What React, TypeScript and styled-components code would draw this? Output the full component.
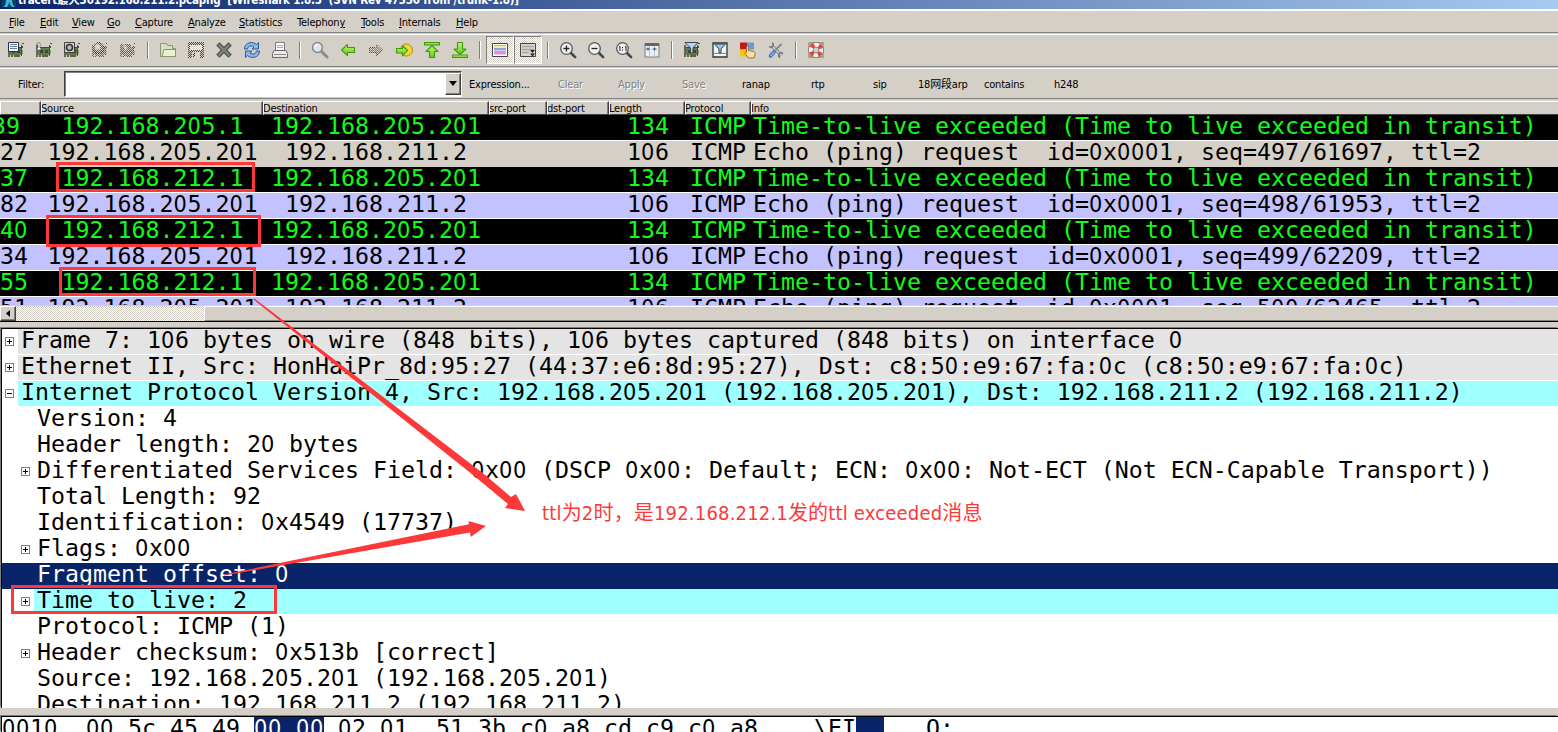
import React from "react";
import styled, { createGlobalStyle, css } from "styled-components";

const FACE = "#d4d0c8";
const NAVY = "#0a246a";
const MARK = "#fc3838";
const UI_FONT = '"DejaVu Sans Condensed", "Noto Sans CJK SC", sans-serif';
const MONO_FONT = '"DejaVu Sans Mono", monospace';

const GlobalStyle = createGlobalStyle`
  * { box-sizing: border-box; }
  html, body { margin: 0; padding: 0; overflow: hidden; background: ${FACE}; }
  u { text-underline-offset: 1px; text-decoration-thickness: 1px; }
`;

const Window = styled.div`
  position: relative;
  display: flex;
  flex-direction: column;
  width: 1558px;
  height: 732px;
  overflow: hidden;
  background: ${FACE};
  color: #000;
  font: 11px/13px ${UI_FONT};
  letter-spacing: -0.2px;
  white-space: pre;
`;

/* ---------- title bar ---------- */

const TitleBar = styled.div`
  display: flex;
  align-items: flex-end;
  flex: none;
  height: 9px;
  overflow: hidden;
  padding-left: 2px;
  background: linear-gradient(90deg, ${NAVY} 0%, #a6caf0 100%);
  color: #fff;
`;

const TitleText = styled.span`
  margin: 0 0 2px 2px;
  font-size: 11.5px;
  font-weight: bold;
  line-height: 14px;
  letter-spacing: -0.18px;
`;

/* ---------- bars ---------- */

const MenuBar = styled.div`
  display: grid;
  flex: none;
  grid-template-columns: 31px 32px 35px 28px 53px 51px 58px 64px 38px 57px 40px;
  height: 24px;
  padding: 5px 0 0 9px;
  border-top: 2px solid #fff;
  border-bottom: 1px solid #808080;
`;

const ToolBar = styled.div`
  display: flex;
  flex: none;
  align-items: center;
  height: 33px;
  margin-top: 1px;
  padding: 0 0 2px 2px;
  border-top: 1px solid #fff;
  border-bottom: 1px solid #808080;
`;

const ToolButton = styled.div<{ $pressed?: boolean }>`
  display: flex;
  align-items: center;
  justify-content: center;
  width: 28px;
  height: 28px;
  ${(p) =>
    p.$pressed &&
    css`
      border: 1px solid;
      border-color: #808080 #fff #fff #808080;
      background: repeating-conic-gradient(#fff 0 25%, ${FACE} 0 50%) 0 0 / 2px 2px;
    `}
`;

const Separator = styled.div`
  width: 2px;
  height: 18px;
  margin: 0 5px;
  border-left: 1px solid #808080;
  border-right: 1px solid #fff;
`;

const FilterBar = styled.div`
  display: flex;
  flex: none;
  align-items: center;
  height: 31px;
  margin-top: 1px;
  border-top: 1px solid #fff;
  border-bottom: 1px solid #808080;
`;

const FilterLabel = styled.span`
  width: 64px;
  padding: 1px 0 0 18px;
`;

const FilterInput = styled.div`
  display: flex;
  justify-content: flex-end;
  width: 398px;
  height: 26px;
  border: 1px solid;
  border-color: #404040 #fff #fff #404040;
  box-shadow: inset 1px 1px #808080;
  background: #fff;
`;

const DropButton = styled.div`
  display: flex;
  align-items: center;
  justify-content: center;
  width: 16px;
  height: 22px;
  margin: 1px 0;
  border: 1px solid;
  border-color: #fff #404040 #404040 #fff;
  box-shadow: inset -1px -1px #808080;
  background: ${FACE};
`;

const FilterActions = styled.div`
  display: grid;
  grid-template-columns: 89px 60px 64px 60px 69px 62px 45px 66px 70px 40px;
  padding: 1px 0 0 7px;
`;

const FilterAction = styled.span<{ $disabled?: boolean }>`
  ${(p) => p.$disabled && "color: #808080; text-shadow: 1px 1px #fff;"}
`;

/* ---------- packet list ---------- */

const LIST_COLUMNS = "41px 222px 226px 58px 62px 76px 66px 1fr";

const PacketPane = styled.div`
  flex: none;
  height: 222px;
  margin-top: 2px;
  overflow: hidden;
`;

const HeaderRow = styled.div`
  display: grid;
  grid-template-columns: ${LIST_COLUMNS};
  height: 14px;
`;

const HeaderCell = styled.div`
  height: 14px;
  overflow: hidden;
  border: 1px solid;
  border-color: #fff #404040 #404040 #fff;
  box-shadow: inset -1px 0 #808080;
  line-height: 13px;
  text-indent: -1px;

  &:last-child {
    border-right: 0;
    box-shadow: none;
  }
`;

const PacketRows = styled.div`
  height: 190px;
  overflow: hidden;
`;

type Tone = "error" | "ping" | "focus";

const tones: Record<Tone, { bg: string; fg: string; line: string }> = {
  error: { bg: "#000", fg: "#12fc1c", line: "#fff" },
  ping: { bg: "#c2c2ff", fg: "#000", line: "#fff" },
  focus: { bg: FACE, fg: "#000", line: FACE },
};

const MonoText = styled.span`
  font: 23.25px/22px ${MONO_FONT};
  letter-spacing: 0;
`;

/* Plain, undotted zero that keeps the 14px character cell. */
const PlainZero = styled.span`
  font-family: "DejaVu Sans Condensed", sans-serif;
  letter-spacing: 0.69px;
`;

const PacketRow = styled.div<{ $tone: Tone }>`
  display: grid;
  grid-template-columns: ${LIST_COLUMNS};
  height: 26px;
  border-bottom: 1px solid ${(p) => tones[p.$tone].line};
  background: ${(p) => tones[p.$tone].bg};
  color: ${(p) => tones[p.$tone].fg};
`;

const PacketCell = styled.div<{ $align?: "center" | "right"; $shift?: number }>`
  display: flex;
  justify-content: ${(p) =>
    p.$align === "center" ? "center" : p.$align === "right" ? "flex-end" : "flex-start"};
  padding-left: ${(p) => Math.max(p.$shift ?? 0, 0)}px;
  padding-right: ${(p) => (p.$align === "right" ? 16 : 0)}px;
  margin-left: ${(p) => Math.min(p.$shift ?? 0, 0)}px;
`;

/* ---------- scroll bar ---------- */

const ScrollBar = styled.div`
  display: flex;
  height: 16px;
  margin-top: 1px;
  border-bottom: 1px solid #000;
  background: repeating-conic-gradient(#fff 0 25%, ${FACE} 0 50%) 0 0 / 2px 2px;
`;

const ScrollArrow = styled.div`
  display: flex;
  align-items: center;
  justify-content: center;
  width: 16px;
  border: 1px solid;
  border-color: #fff #404040 #404040 #fff;
  box-shadow: inset -1px -1px #808080;
  background: ${FACE};
`;

const ScrollThumb = styled.div`
  flex: 1;
  margin-left: 188px;
  border-top: 1px solid #fff;
  border-left: 1px solid #fff;
  border-bottom: 1px solid #808080;
  background: ${FACE};
`;

/* ---------- packet details ---------- */

const Pane = styled.div<{ $height: number; $gap: number }>`
  flex: none;
  height: ${(p) => p.$height}px;
  margin-top: ${(p) => p.$gap}px;
  overflow: hidden;
  border: solid #000;
  border-width: 1px 0 0 1px;
  margin-left: 1px;
  box-shadow: -1px -1px #808080;
  background: #fff;
`;

const TreeRow = styled.div<{ $selected?: boolean; $level: number }>`
  display: grid;
  grid-template-columns: ${(p) => (p.$level ? 32 : 16)}px 1fr;
  height: 26px;
  background: ${(p) => (p.$selected ? NAVY : "#fff")};
  color: ${(p) => (p.$selected ? "#fff" : "#000")};
`;

const TreeGutter = styled.div`
  display: flex;
  justify-content: flex-end;
  padding: 8px 4px 0 0;
`;

const TreeLabel = styled.div<{ $fill?: string }>`
  height: 25px;
  padding-left: 3px;
  background: ${(p) => p.$fill ?? "transparent"};
`;

/* ---------- bytes ---------- */

const BytesRow = styled.div`
  padding-left: 0;
`;

const ByteSelection = styled.span`
  display: inline-block;
  background: ${NAVY};
  color: #fff;
`;

/* ---------- annotations over the panes ---------- */

const MarkLayer = styled.svg`
  position: absolute;
  inset: 0;
  pointer-events: none;
`;

const MarkNote = styled.div`
  position: absolute;
  left: 542px;
  top: 500px;
  color: ${MARK};
  font: 20px/26px ${UI_FONT};
  letter-spacing: 0.18px;
`;

function Mono({ text }: { text: string }) {
  return (
    <MonoText>
      {text.split(/(0+)/).map((part, i) =>
        part.startsWith("0") ? <PlainZero key={i}>{part}</PlainZero> : part,
      )}
    </MonoText>
  );
}

/* ---------- icons ---------- */

const Icon = ({ children, dim }: { children: React.ReactNode; dim?: boolean }) => (
  <svg width="18" height="18" viewBox="0 0 18 18">
    <defs>
      <pattern id="dither" width="2" height="2" patternUnits="userSpaceOnUse">
        <path d="M0 0h1v1h-1zM1 1h1v1h-1z" fill={FACE} shapeRendering="crispEdges" />
      </pattern>
      <linearGradient id="lime" x1="0" y1="0" x2="0" y2="1">
        <stop offset="0" stopColor="#c4f56a" />
        <stop offset="1" stopColor="#62c81c" />
      </linearGradient>
    </defs>
    {children}
    {dim && <rect width="18" height="18" fill="url(#dither)" />}
  </svg>
);

const Card = () => (
  <g shapeRendering="crispEdges">
    <path d="M1 4h2v12h-2z" fill="#66665e" />
    <path d="M3 6h11v8h-11z" fill="#5f7a50" />
    <path d="M3 6h11v1h-11zM5 9h3v3h-3zM10 9h3v3h-3z" fill="#3a4a34" />
    <path d="M4 14h2v2h-2zM7 14h6v2h-6z" fill="#6d5c36" />
    <path d="M14 4h1v11h-1zM15 2h2v1h-2zM15 5h1v2h-1z" fill="#4c4c48" />
    <path d="M15 9h1v4h-1z" fill="#8aa070" />
  </g>
);

const Lens = ({ children }: { children?: React.ReactNode }) => (
  <>
    <path d="M11.5 11.5l4.6 4.6" stroke="#44484a" strokeWidth="2.6" strokeLinecap="round" />
    <circle cx="7.5" cy="7.5" r="5.8" fill="#eef0ee" stroke="#55595a" strokeWidth="1.3" />
    {children}
  </>
);

const GREEN = { fill: "url(#lime)", stroke: "#3f9a10", strokeWidth: 1.1, strokeLinejoin: "round" as const };

const icons: Record<string, React.ReactNode> = {
  interfaces: (
    <Icon>
      <Card />
      <path d="M1.5 1.5h10v9h-10z" fill="#f4f6f8" stroke="#30343a" />
      <path d="M3 3.5h7M3 5.5h7M3 7.5h7" stroke="#5c7ea8" />
    </Icon>
  ),
  options: (
    <Icon>
      <Card />
      <path d="M2 2h3v5h1v2h-4v-2h1v-3h-1z" fill="#fff" stroke="#555" strokeWidth=".7" />
    </Icon>
  ),
  start: (
    <Icon>
      <Card />
      <path d="M1.5 1.5h10v10h-10z" fill="#c9cdca" stroke="#444" />
      <circle cx="6.5" cy="6.5" r="3" fill="#b9c0bc" stroke="#333" strokeWidth="1.6" />
    </Icon>
  ),
  stop: (
    <Icon dim>
      <Card />
      <circle cx="7.5" cy="7" r="5.5" fill="#70504c" stroke="#282020" />
      <circle cx="6.5" cy="6" r="3.4" fill="#e8dcd8" stroke="#c04038" strokeWidth="1.4" />
    </Icon>
  ),
  restart: (
    <Icon dim>
      <Card />
      <path d="M2 3h10v9h-10z" fill="#5c5c54" />
      <path d="M3 2l6 5-3 3z" fill="#d8b870" />
    </Icon>
  ),
  open: (
    <Icon>
      <path d="M1.500 2.500h6l1 2h5v3h3v8h-15z" fill="#d9dfc0" stroke="#8a9870" />
      <path d="M3 15.500l2-7h11.500v7z" fill="#e9eed6" stroke="#8a9870" />
    </Icon>
  ),
  save: (
    <Icon dim>
      <g shapeRendering="crispEdges">
        <path d="M1 1h16v16h-16z" fill="#38506c" />
        <path d="M3 1h12v3h-12z" fill="#b81818" />
        <path d="M3 4h12v5h-12z" fill="#fff" />
        <path d="M5 11h8v6h-8z" fill="#d8dce0" />
        <path d="M6 12h2v4h-2z" fill="#203050" />
      </g>
    </Icon>
  ),
  close: (
    <Icon>
      <path d="M4.500 4.500l9 9M13.500 4.500l-9 9" stroke="#4b4e4b" strokeWidth="4.600" strokeLinecap="square" />
      <path d="M4.500 4.500l9 9M13.500 4.500l-9 9" stroke="#7c807c" strokeWidth="2.600" strokeLinecap="square" />
    </Icon>
  ),
  reload: (
    <Icon>
      <path
        d="M1.500 8c0-7 8.500-8 12-4.500l2-2v6.500h-6.500l2-2c-2.500-2-6-1-6.500 2z"
        fill="#8db5e6"
        stroke="#2c5c9e"
        strokeLinejoin="round"
      />
      <path
        d="M16.500 10c0 7-8.500 8-12 4.500l-2 2v-6.500h6.500l-2 2c2.500 2 6 1 6.500-2z"
        fill="#8db5e6"
        stroke="#2c5c9e"
        strokeLinejoin="round"
      />
    </Icon>
  ),
  print: (
    <Icon>
      <path d="M4.500 1.500h9v8h-9z" fill="#fff" stroke="#777" />
      <path d="M6 4.500h6M6 6.500h6" stroke="#aaa" />
      <path d="M3 9.500h12l1.500 3v4h-15v-4z" fill="#eceae6" stroke="#666" />
      <path d="M3 13.500h12" stroke="#888" />
    </Icon>
  ),
  find: (
    <Icon>
      <path d="M11 11l5 5" stroke="#8a8c8c" strokeWidth="3" strokeLinecap="round" />
      <circle cx="6.500" cy="6.500" r="4.900" fill="#dde6ee" stroke="#888a8a" strokeWidth="1.500" />
      <path d="M3.800 6a3 3 0 0 1 3-2.500" stroke="#fff" strokeWidth="1.500" fill="none" />
    </Icon>
  ),
  back: (
    <Icon>
      <path d="M2.500 9l6-5.500v3h7v5h-7v3z" {...GREEN} />
    </Icon>
  ),
  forward: (
    <Icon dim>
      <path d="M15.500 9l-6-5.500v3h-7v5h7v3z" fill="#6c9458" stroke="#34542a" />
    </Icon>
  ),
  goto: (
    <Icon>
      <circle cx="11.500" cy="9" r="6" fill="#f6d23c" stroke="#b98a10" />
      <path d="M12.500 9.500l-5-5v3h-6v4.500h6v3z" {...GREEN} />
    </Icon>
  ),
  first: (
    <Icon>
      <path d="M1.500 1.500h15v2.500h-15z" {...GREEN} />
      <path d="M9 4.500l6 6h-3.500v6h-5v-6h-3.500z" {...GREEN} />
    </Icon>
  ),
  last: (
    <Icon>
      <path d="M1.500 14h15v2.500h-15z" {...GREEN} />
      <path d="M9 13.500l6-5.500h-3.500v-6.500h-5v6.500h-3.500z" {...GREEN} />
    </Icon>
  ),
  colorize: (
    <Icon>
      <path d="M1.500 2.500h15v13h-15z" fill="#fff" stroke="#444" />
      <path d="M3 4.500h12" stroke="#f0a0a0" />
      <path d="M3 6h12" stroke="#e8dc50" />
      <path d="M3 8h12" stroke="#5890c0" strokeWidth="1.500" />
      <path d="M3 10.500h12M3 12.500h12" stroke="#d890e0" strokeWidth="2" />
    </Icon>
  ),
  autoscroll: (
    <Icon>
      <path d="M1.500 2.500h15v13h-15z" fill="#d6d6d2" stroke="#444" />
      <path d="M3 5.500h12M3 8.500h12M3 11.500h7" stroke="#a4a4a4" strokeWidth="1.600" />
      <path d="M11 9h5l-2.500 3zM11 12.500h5l-2.500 3z" fill="#222" />
    </Icon>
  ),
  zoomin: (
    <Icon>
      <Lens>
        <path d="M4.500 7.500h6M7.500 4.500v6" stroke="#222" strokeWidth="1.300" />
      </Lens>
    </Icon>
  ),
  zoomout: (
    <Icon>
      <Lens>
        <path d="M4.500 7.500h6" stroke="#222" strokeWidth="1.300" />
      </Lens>
    </Icon>
  ),
  zoomone: (
    <Icon>
      <Lens>
        <path d="M4 6.200l1-.7v4.500M10 6.200l1-.7v4.500M7.500 6v1.200M7.500 8.500v1.200" stroke="#222" fill="none" />
      </Lens>
    </Icon>
  ),
  resize: (
    <Icon>
      <path d="M2 2.500h14v13.500h-14z" fill="#eceeee" stroke="#787c80" />
      <path d="M2 2h14v3h-14z" fill="#60686e" />
      <path d="M6.500 5v11M11.500 5v11" stroke="#c4c8ca" />
      <path d="M3 8h4M5 6.500v3M9.500 8h4M11.500 6.500v3" stroke="#2c5888" />
    </Icon>
  ),
  capfilter: (
    <Icon>
      <Card />
      <path d="M2 1.500h13l-5 5.500v5h-2.500v-5z" fill="#b8d4ec" stroke="#33475c" />
    </Icon>
  ),
  dispfilter: (
    <Icon>
      <path d="M2 2h14v14h-14z" fill="#f2f2ee" stroke="#333" strokeWidth="1.300" />
      <path d="M3 12.500h12" stroke="#888" />
      <path d="M3.500 3h11l-4.500 5v4h-2v-4z" fill="#9cc0e0" stroke="#33475c" />
    </Icon>
  ),
  rules: (
    <Icon>
      <path d="M1 1.500h7v7h-7z" fill="#c8141c" />
      <path d="M8 1.500h7v7h-7z" fill="#6b9ad6" />
      <path d="M1 8.500h7v7h-7z" fill="#f4c414" />
      <path
        d="M7.500 5.500q1.500-1 2 .5v3.500l5.500 1q1.500.5 1 3l-1 3.500h-5.500l-3.500-4.500q0-1.500 1.500-1z"
        fill="#fbdcae"
        stroke="#a06c28"
      />
    </Icon>
  ),
  prefs: (
    <Icon>
      <path d="M4.500 4.500l10 10" stroke="#70767a" strokeWidth="3" />
      <path d="M4.500 4.500l10 10" stroke="#dfe2e2" strokeWidth="1.200" />
      <path d="M2 5.500q3 2 4-.5t-1-3M16 12.500q-3-2-4 .5t1 3.500" stroke="#70767a" strokeWidth="1.500" fill="none" />
      <path d="M14.500 3l-6 6" stroke="#85898c" strokeWidth="2" />
      <path d="M7 11l-3.500 4" stroke="#3c70b4" strokeWidth="3.600" strokeLinecap="round" />
      <path d="M6.800 11.200l-3 3.500" stroke="#8eb6e6" strokeWidth="1.500" strokeLinecap="round" />
    </Icon>
  ),
  help: (
    <Icon>
      <path d="M2 2h14v14h-14z" fill="none" stroke="#a08c60" strokeWidth="1.300" />
      <circle cx="9" cy="9" r="5.200" fill="none" stroke="#777" strokeWidth="5.400" />
      <circle cx="9" cy="9" r="5.200" fill="none" stroke="#f4f2f0" strokeWidth="4" />
      <circle
        cx="9"
        cy="9"
        r="5.200"
        fill="none"
        stroke="#e8403c"
        strokeWidth="4"
        strokeDasharray="3.600 4.568"
        strokeDashoffset="-2.300"
      />
    </Icon>
  ),
};

const toolGroups: string[][] = [
  ["interfaces", "options", "start", "stop", "restart"],
  ["open", "save", "close", "reload", "print"],
  ["find", "back", "forward", "goto", "first", "last"],
  ["colorize", "autoscroll"],
  ["zoomin", "zoomout", "zoomone", "resize"],
  ["capfilter", "dispfilter", "rules", "prefs"],
  ["help"],
];

const Expander = ({ open }: { open: boolean }) => (
  <svg width="9" height="9" viewBox="0 0 9 9" shapeRendering="crispEdges">
    <path d="M.5 .5h8v8h-8z" fill="#fff" stroke="#808080" />
    <path d={open ? "M2 4.500h5" : "M2 4.500h5M4.500 2v5"} stroke="#000" />
  </svg>
);

/* ---------- data ---------- */

const menus: [string, string, string][] = [
  ["", "F", "ile"],
  ["", "E", "dit"],
  ["", "V", "iew"],
  ["", "G", "o"],
  ["", "C", "apture"],
  ["", "A", "nalyze"],
  ["", "S", "tatistics"],
  ["Telephon", "y", ""],
  ["", "T", "ools"],
  ["", "I", "nternals"],
  ["", "H", "elp"],
];

const filterActions: [string, boolean][] = [
  ["Expression...", false],
  ["Clear", true],
  ["Apply", true],
  ["Save", true],
  ["ranap", false],
  ["rtp", false],
  ["sip", false],
  ["18网段arp", false],
  ["contains", false],
  ["h248", false],
];

const headers = ["", "Source", "Destination", "src-port", "dst-port", "Length", "Protocol", "Info"];

interface Packet {
  no: string;
  shift: number;
  tone: Tone;
  src: string;
  dst: string;
  len: string;
  info: string;
}

const exceeded = (no: string, src: string, shift = 0): Packet => ({
  no,
  shift,
  tone: "error",
  src,
  dst: "192.168.205.201",
  len: "134",
  info: "Time-to-live exceeded (Time to live exceeded in transit)",
});

const request = (no: string, seq: string, tone: Tone = "ping"): Packet => ({
  no,
  shift: 0,
  tone,
  src: "192.168.205.201",
  dst: "192.168.211.2",
  len: "106",
  info: `Echo (ping) request  id=0x0001, seq=${seq}, ttl=2`,
});

const packets: Packet[] = [
  exceeded("39", "192.168.205.1", -8),
  request("27", "497/61697", "focus"),
  exceeded("37", "192.168.212.1"),
  request("82", "498/61953"),
  exceeded("40", "192.168.212.1"),
  request("34", "499/62209"),
  exceeded("55", "192.168.212.1"),
  request("51", "500/62465"),
];

interface TreeItem {
  text: string;
  level: number;
  expander?: "plus" | "minus";
  fill?: string;
  selected?: boolean;
}

const GRAY = "#e4e4e4";
const CYAN = "#a0ffff";

const tree: TreeItem[] = [
  {
    text: "Frame 7: 106 bytes on wire (848 bits), 106 bytes captured (848 bits) on interface 0",
    level: 0,
    expander: "plus",
    fill: GRAY,
  },
  {
    text: "Ethernet II, Src: HonHaiPr_8d:95:27 (44:37:e6:8d:95:27), Dst: c8:50:e9:67:fa:0c (c8:50:e9:67:fa:0c)",
    level: 0,
    expander: "plus",
    fill: GRAY,
  },
  {
    text: "Internet Protocol Version 4, Src: 192.168.205.201 (192.168.205.201), Dst: 192.168.211.2 (192.168.211.2)",
    level: 0,
    expander: "minus",
    fill: CYAN,
  },
  { text: "Version: 4", level: 1 },
  { text: "Header length: 20 bytes", level: 1 },
  {
    text: "Differentiated Services Field: 0x00 (DSCP 0x00: Default; ECN: 0x00: Not-ECT (Not ECN-Capable Transport))",
    level: 1,
    expander: "plus",
  },
  { text: "Total Length: 92", level: 1 },
  { text: "Identification: 0x4549 (17737)", level: 1 },
  { text: "Flags: 0x00", level: 1, expander: "plus" },
  { text: "Fragment offset: 0", level: 1, selected: true },
  { text: "Time to live: 2", level: 1, expander: "plus", fill: CYAN },
  { text: "Protocol: ICMP (1)", level: 1 },
  { text: "Header checksum: 0x513b [correct]", level: 1, expander: "plus" },
  { text: "Source: 192.168.205.201 (192.168.205.201)", level: 1 },
  { text: "Destination: 192.168.211.2 (192.168.211.2)", level: 1 },
];

export default function App() {
  return (
    <>
      <GlobalStyle />
      <Window>
        <TitleBar>
          <svg width="14" height="9" viewBox="0 0 14 9">
            <path d="M0 0h14v7h-14z" fill="#103c58" />
            <path d="M1 7q3-1 3-7h6q0 5 3 7z" fill="#38b8e0" />
            <path d="M5 7q2-2 2-5 1 3 3 5z" fill="#103c58" />
          </svg>
          <TitleText>
            tracert最大30192.168.211.2.pcapng  [Wireshark 1.8.5  (SVN Rev 47350 from /trunk-1.8)]
          </TitleText>
        </TitleBar>

        <MenuBar>
          {menus.map(([before, key, after]) => (
            <span key={before + key + after}>
              {before}
              <u>{key}</u>
              {after}
            </span>
          ))}
        </MenuBar>

        <ToolBar>
          {toolGroups.map((group, g) => (
            <React.Fragment key={g}>
              {g > 0 && <Separator />}
              {group.map((name) => (
                <ToolButton key={name} $pressed={g === 3}>
                  {icons[name]}
                </ToolButton>
              ))}
            </React.Fragment>
          ))}
        </ToolBar>

        <FilterBar>
          <FilterLabel>Filter:</FilterLabel>
          <FilterInput>
            <DropButton>
              <svg width="8" height="5" viewBox="0 0 8 5">
                <path d="M0 0h8l-4 5z" />
              </svg>
            </DropButton>
          </FilterInput>
          <FilterActions>
            {filterActions.map(([label, disabled]) => (
              <FilterAction key={label} $disabled={disabled}>
                {label}
              </FilterAction>
            ))}
          </FilterActions>
        </FilterBar>

        <PacketPane>
          <HeaderRow>
            {headers.map((h) => (
              <HeaderCell key={h}>{h}</HeaderCell>
            ))}
          </HeaderRow>
          <PacketRows>
            {packets.map((p, i) => (
              <PacketRow key={i} $tone={p.tone}>
                <PacketCell $shift={p.shift}>
                  <Mono text={p.no} />
                </PacketCell>
                <PacketCell $align="center" $shift={1}>
                  <Mono text={p.src} />
                </PacketCell>
                <PacketCell $align="center">
                  <Mono text={p.dst} />
                </PacketCell>
                <PacketCell />
                <PacketCell />
                <PacketCell $align="right">
                  <Mono text={p.len} />
                </PacketCell>
                <PacketCell $shift={5}>
                  <Mono text="ICMP" />
                </PacketCell>
                <PacketCell $shift={2}>
                  <Mono text={p.info} />
                </PacketCell>
              </PacketRow>
            ))}
          </PacketRows>
          <ScrollBar>
            <ScrollArrow>
              <svg width="4" height="7" viewBox="0 0 4 7">
                <path d="M4 0v7l-4-3.500z" />
              </svg>
            </ScrollArrow>
            <ScrollThumb />
          </ScrollBar>
        </PacketPane>

        <Pane $height={380} $gap={5}>
          {tree.map((t) => (
            <TreeRow key={t.text} $level={t.level} $selected={t.selected}>
              <TreeGutter>{t.expander && <Expander open={t.expander === "minus"} />}</TreeGutter>
              <TreeLabel $fill={t.fill}>
                <Mono text={t.text} />
              </TreeLabel>
            </TreeRow>
          ))}
        </Pane>

        <Pane $height={16} $gap={8}>
          <BytesRow>
            <Mono text="0010  00 5c 45 49 " />
            <ByteSelection>
              <Mono text="00 00" />
            </ByteSelection>
            <Mono text=" 02 01  51 3b c0 a8 cd c9 c0 a8   .\EI" />
            <ByteSelection>
              <Mono text=".." />
            </ByteSelection>
            <Mono text=".. Q;......" />
          </BytesRow>
        </Pane>

        <MarkLayer width="1558" height="732" viewBox="0 0 1558 732">
          <g fill="none" stroke={MARK} strokeWidth="3">
            <path d="M57.500 163.500h196v27h-196z" />
            <path d="M47.500 216.500h212v29h-212z" />
            <path d="M60.500 268.500h194v26h-194z" />
            <path d="M12.500 586.500h263v26h-263z" />
          </g>
          <g fill={MARK}>
            <path d="M254.500 298.500L484 474L511 497L516 494L525 511L505 508L508 504L473 475L253.500 299.500Z" />
            <path d="M224 574.500L469 524.300L468.500 521L486 526L470.700 537L470 532.500L224 575.500Z" />
          </g>
        </MarkLayer>
        <MarkNote>ttl为2时，是192.168.212.1发的ttl exceeded消息</MarkNote>
      </Window>
    </>
  );
}
